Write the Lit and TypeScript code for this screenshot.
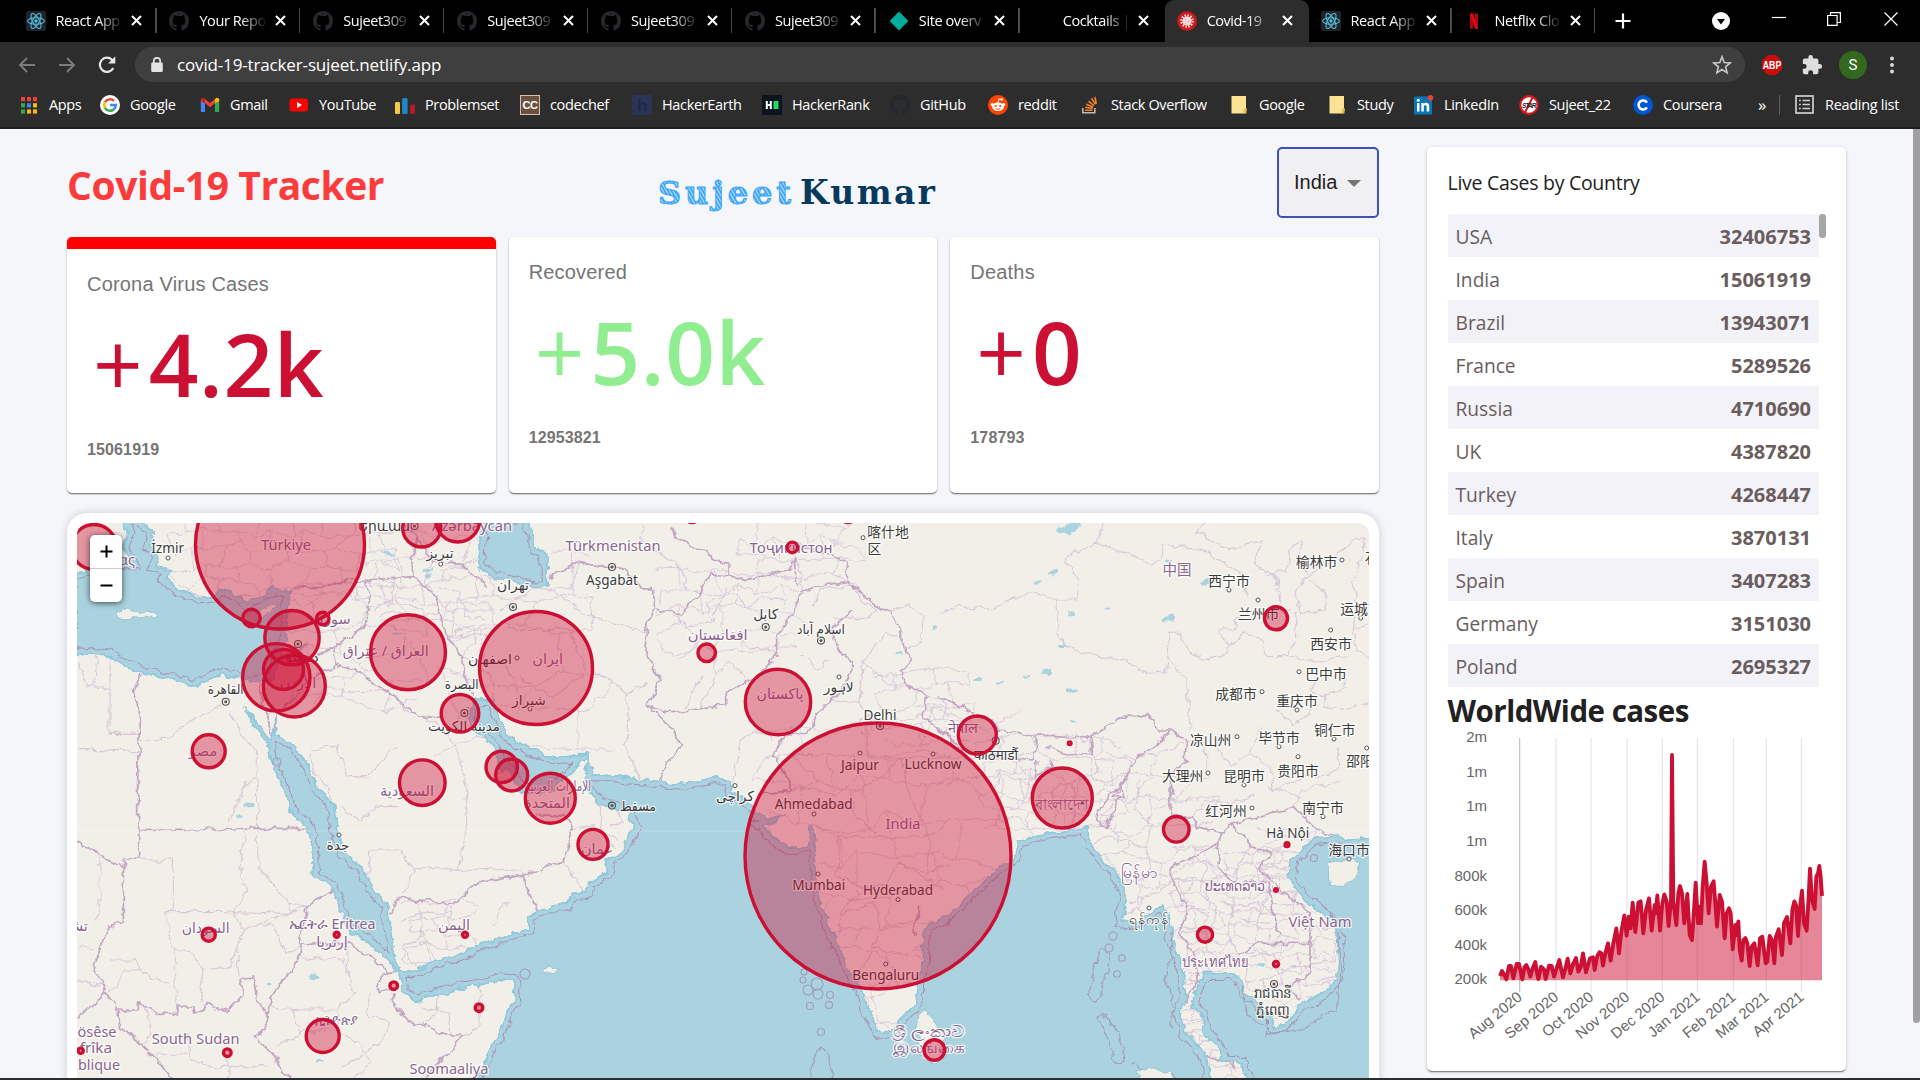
import { LitElement, html, css, svg } from "lit";
import { customElement, property } from "lit/decorators.js";

/* ---------- shared icons ---------- */

const github = (c: string) => html`<svg viewBox="0 0 16 16" width="20" height="20"><path fill=${c} d="M8 0C3.58 0 0 3.58 0 8c0 3.54 2.29 6.53 5.47 7.59.4.07.55-.17.55-.38 0-.19-.01-.82-.01-1.49-2.01.37-2.53-.49-2.69-.94-.09-.23-.48-.94-.82-1.13-.28-.15-.68-.52-.01-.53.63-.01 1.08.58 1.23.82.72 1.21 1.87.87 2.33.66.07-.52.28-.87.51-1.07-1.78-.2-3.64-.89-3.64-3.95 0-.87.31-1.59.82-2.15-.08-.2-.36-1.02.08-2.12 0 0 .67-.21 2.2.82a7.6 7.6 0 0 1 4 0c1.53-1.04 2.2-.82 2.2-.82.44 1.1.16 1.92.08 2.12.51.56.82 1.27.82 2.15 0 3.07-1.87 3.75-3.65 3.95.29.25.54.73.54 1.48 0 1.07-.01 1.93-.01 2.2 0 .21.15.46.55.38A8.01 8.01 0 0 0 16 8c0-4.42-3.58-8-8-8z"/></svg>`;

const react = html`<svg viewBox="0 0 20 20" width="20" height="20"><rect width="20" height="20" rx="2" fill="#20232a"/><g fill="none" stroke="#53c1de" stroke-width="1.1"><ellipse cx="10" cy="10" rx="8.4" ry="3.3"/><ellipse cx="10" cy="10" rx="8.4" ry="3.3" transform="rotate(60 10 10)"/><ellipse cx="10" cy="10" rx="8.4" ry="3.3" transform="rotate(120 10 10)"/></g><circle cx="10" cy="10" r="1.7" fill="#53c1de"/></svg>`;

const netlify = html`<svg viewBox="0 0 20 20" width="20" height="20"><path fill="#00ad9f" d="M10 .6 19.4 10 10 19.4.6 10z"/></svg>`;

const virus = html`<svg viewBox="0 0 20 20" width="20" height="20"><circle cx="10" cy="10" r="9.8" fill="#d01a1e"/><circle cx="10" cy="10" r="4.6" fill="#f6dede"/><circle cx="10" cy="10" r="5.6" fill="none" stroke="#f6dede" stroke-width="2.4" stroke-dasharray="1.5 1.4"/><g fill="#e49a9c"><circle cx="8.6" cy="8.8" r=".8"/><circle cx="11.6" cy="10.4" r=".8"/><circle cx="9" cy="12" r=".7"/></g></svg>`;

const netflix = html`<svg viewBox="0 0 20 20" width="20" height="20"><path fill="#b1060f" d="M6 2.5h3v15l-3 .4zM11 2.5h3v15.4l-3-.4z"/><path fill="#e50914" d="M6 2.5h3l5 15.4-3-.4z"/></svg>`;

const folder = html`<svg viewBox="0 0 20 20" width="20" height="20"><path fill="#fde293" d="M2.5 1H17v14l-1 1v2.6H2.5z"/><path fill="#e3bd4f" d="M15.2 13.5H18l-.6 5.1h-2.8z"/></svg>`;

/* ---------- browser chrome ---------- */

const tabs = [
  { icon: react, title: "React App" },
  { icon: github("#24292e"), title: "Your Repo" },
  { icon: github("#24292e"), title: "Sujeet309" },
  { icon: github("#24292e"), title: "Sujeet309" },
  { icon: github("#24292e"), title: "Sujeet309" },
  { icon: github("#24292e"), title: "Sujeet309" },
  { icon: netlify, title: "Site overv" },
  { icon: "", title: "Cocktails |" },
  { icon: virus, title: "Covid-19 ", active: true },
  { icon: react, title: "React App" },
  { icon: netflix, title: "Netflix Clo" },
];

const apps = html`<svg viewBox="0 0 20 20" width="20" height="20">${[0, 1, 2].map((r) => [0, 1, 2].map((c) => svg`<rect x=${2 + c * 6} y=${2 + r * 6.2} width="4" height="4.2" fill=${[["#ea4335", "#ea4335", "#ea4335"], ["#34a853", "#4285f4", "#fbbc05"], ["#34a853", "#fbbc05", "#fbbc05"]][r][c]}/>`))}</svg>`;

const bookmarks = [
  { w: 81, label: "Apps", icon: apps },
  { w: 100, label: "Google", icon: html`<svg viewBox="0 0 20 20" width="20" height="20"><circle cx="10" cy="10" r="10" fill="#fff"/><g fill="none" stroke-width="2.5"><path stroke="#ea4335" d="M5 7.2A5.8 5.8 0 0 1 14 5.9"/><path stroke="#fbbc05" d="M5 12.8A5.8 5.8 0 0 1 5 7.2"/><path stroke="#34a853" d="M13.6 14.5A5.8 5.8 0 0 1 5 12.8"/><path stroke="#4285f4" d="M10 10h5.8a5.8 5.8 0 0 1-2.2 4.5"/></g></svg>` },
  { w: 89, label: "Gmail", icon: html`<svg viewBox="0 0 20 20" width="20" height="20"><path fill="#4285f4" d="M.8 4.5 5 8v9H2A1.2 1.2 0 0 1 .8 15.800z"/><path fill="#34a853" d="M19.200 4.500 15 8v9h3a1.200 1.200 0 0 0 1.200-1.200z"/><path fill="#ea4335" d="M5 8V4l5 4 5-4v4.300l-5 4z"/><path fill="#c5221f" d="M.8 6V4.800C.8 3 2.800 2.200 4 3.200L5 4v4.300z"/><path fill="#fbbc04" d="M19.200 6V4.800c0-1.800-2-2.600-3.200-1.600L15 4v4.300z"/></svg>` },
  { w: 106, label: "YouTube", icon: html`<svg viewBox="0 0 20 20" width="20" height="20"><rect x=".5" y="3.500" width="18.500" height="13" rx="3" fill="#f00"/><path fill="#fff" d="M8 7v6l5-3z"/></svg>` },
  { w: 125, label: "Problemset", icon: html`<svg viewBox="0 0 20 20" width="20" height="20"><rect y="7" width="5" height="12" rx="1.300" fill="#f6c944"/><rect x="7.200" y="3" width="5.400" height="16" rx="1.300" fill="#1f8acb"/><rect x="15" y="9.500" width="5" height="9.500" rx="1.300" fill="#b11d23"/></svg>` },
  { w: 112, label: "codechef", icon: html`<svg viewBox="0 0 20 20" width="20" height="20"><rect width="20" height="20" fill="#d5bfae"/><rect x="1" y="1" width="18" height="18" fill="#6d5140"/><text x="10" y="13.800" text-anchor="middle" font-family="Liberation Sans" font-weight="700" font-size="11" fill="#fff">CC</text></svg>` },
  { w: 130, label: "HackerEarth", icon: html`<svg viewBox="0 0 20 20" width="20" height="20"><rect width="20" height="20" fill="#2c3454"/><text x="10" y="15.500" text-anchor="middle" font-family="Liberation Sans" font-weight="700" font-size="17" fill="#20284a">h</text></svg>` },
  { w: 128, label: "HackerRank", icon: html`<svg viewBox="0 0 20 20" width="20" height="20"><rect width="20" height="20" fill="#0e141e"/><path fill="#fff" d="M3.800 6h2v3h2V6h2v8h-2v-3h-2v3h-2z"/><rect x="11.500" y="6" width="5" height="8" fill="#1ddb63"/></svg>` },
  { w: 98, label: "GitHub", icon: github("#24292e") },
  { w: 93, label: "reddit", icon: html`<svg viewBox="0 0 20 20" width="20" height="20"><circle cx="10" cy="10" r="10" fill="#ff4500"/><g fill="#fff"><ellipse cx="10" cy="11.800" rx="6" ry="4.200"/><circle cx="4.300" cy="9.500" r="1.600"/><circle cx="15.700" cy="9.500" r="1.600"/><circle cx="13.800" cy="4.400" r="1.200"/></g><path d="M10 8l.9-4 3 .6" fill="none" stroke="#fff" stroke-width=".9"/><g fill="#ff4500"><circle cx="7.700" cy="11" r="1.100"/><circle cx="12.300" cy="11" r="1.100"/></g><path d="M7.500 13.600q2.500 1.600 5 0" fill="none" stroke="#ff4500" stroke-width=".9"/></svg>` },
  { w: 148, label: "Stack Overflow", icon: html`<svg viewBox="0 0 20 20" width="20" height="20"><path fill="none" stroke="#bcbbbb" stroke-width="1.600" d="M1.800 13v4.800h12V13"/><g stroke="#f48024" stroke-width="1.600"><path d="M4 15.200h7.500M4.200 12.300l7.400 1.100M5.200 9.200l6.900 2.800M7.400 6.100l5.700 4.500M10.600 3.300l4 6M14 1.800l1.300 7"/></g></svg>` },
  { w: 98, label: "Google", icon: folder },
  { w: 87, label: "Study", icon: folder },
  { w: 105, label: "LinkedIn", icon: html`<svg viewBox="0 0 20 20" width="20" height="20"><rect y="1.500" width="18" height="18" rx="1" fill="#0a77b5"/><g fill="#fff"><rect x="3" y="8" width="2.500" height="8.500"/><circle cx="4.250" cy="5.300" r="1.500"/><path d="M7.300 8h2.400v1.200c1.400-2.200 5.500-1.800 5.500 2v5.300h-2.500v-4.700c0-2.300-2.900-2.100-2.900 0v4.700H7.300z"/></g><circle cx="16.500" cy="2.800" r="2.800" fill="#f03e33"/></svg>` },
  { w: 114, label: "Sujeet_22", icon: html`<svg viewBox="0 0 20 20" width="20" height="20"><circle cx="10" cy="10" r="8.800" fill="#fff" stroke="#d8141c" stroke-width="2.200"/><path stroke="#d8141c" stroke-width="2" d="M13.500 2.500 6 17.500"/><text x="10" y="12.500" text-anchor="middle" font-family="Liberation Sans" font-weight="700" font-style="italic" font-size="6.500" fill="#222" textLength="14">STAR</text></svg>` },
  { w: 118, label: "Coursera", icon: html`<svg viewBox="0 0 20 20" width="20" height="20"><circle cx="10" cy="10" r="10" fill="#0056d2"/><path fill="none" stroke="#fff" stroke-width="2.600" d="M13.900 7.600a4.500 4.500 0 1 0 0 4.800"/></svg>` },
];

@customElement("browser-chrome")
class BrowserChrome extends LitElement {
  static styles = css`
    :host { display: block; height: 129px; background: #2d2d2d; font-family: "Open Sans", "Noto Sans", sans-serif; color: #fff; box-sizing: border-box; border-bottom: 2px solid #1d1d1d; overflow: hidden; }
    svg { display: block; flex: none; }
    .tabs { height: 42px; background: #000; display: flex; align-items: stretch; padding-left: 13.500px; box-sizing: border-box; }
    .tab { width: 143.900px; box-sizing: border-box; display: flex; align-items: center; padding: 0 0 1px 12px; position: relative; flex: none; }
    .tab:not(.active)::after { content: ""; width: 1.500px; height: 25px; background: #4b4b4b; margin-left: 13px; }
    .tab.pre::after, .tab.active::after { visibility: hidden; }
    .ico { width: 20px; height: 20px; flex: none; margin-right: 10px; }
    .title { width: 68px; overflow: hidden; white-space: pre; font-size: 14.500px; letter-spacing: -.4px; flex: none; -webkit-mask-image: linear-gradient(90deg, #000 60%, transparent 100%); }
    .x { margin-left: 7.500px; }
    .active { background: #2d2d2d; border-radius: 9px 9px 0 0; }
    .active .title { letter-spacing: -.5px; }
    .tools { display: flex; flex: 1; align-items: center; }
    .plus { margin-left: 19px; }
    .media { margin-left: 81px; }
    .min { margin-left: 42px; margin-bottom: 6px; }
    .max { margin-left: 41px; margin-bottom: 5px; }
    .cls { margin-left: 43px; margin-bottom: 5px; }
    .bar { height: 45px; display: flex; align-items: center; box-sizing: border-box; padding-left: 17px; }
    .bar > svg { margin-right: 20px; }
    .bar > .reload { margin-right: 18px; }
    .omni { height: 35px; width: 1610px; border-radius: 18px; background: #3f3f3f; display: flex; align-items: center; box-sizing: border-box; padding: 0 13px 0 15px; }
    .url { flex: 1; font-size: 17px; letter-spacing: -.15px; margin-left: 13px; }
    .ext { display: flex; align-items: center; margin-left: 17px; }
    .puzzle { margin-left: 19px; }
    .av { width: 28px; height: 28px; border-radius: 50%; background: #33691e; display: grid; place-items: center; font: 15px Roboto, sans-serif; margin: 0 22px 0 16px; }
    .marks { display: flex; align-items: center; height: 35px; padding-left: 19px; }
    .mark { display: flex; align-items: center; white-space: nowrap; font-size: 14.500px; letter-spacing: -.35px; flex: none; }
    .mark svg { margin-right: 10px; }
    .more { margin-left: 7px; width: 21px; font-size: 17px; }
    .sep { width: 1px; height: 20px; background: #5c5c5c; margin-right: 15px; }
    .reading { display: flex; align-items: center; gap: 11px; font-size: 14.500px; letter-spacing: -.3px; white-space: nowrap; }
  `;
  render() {
    const cross = html`<svg class="x" width="11" height="11" viewBox="0 0 11 11"><path d="M1 1l9 9M10 1l-9 9" stroke="#fff" stroke-width="2"/></svg>`;
    return html`
      <div class="tabs">
        ${tabs.map((t, i) => html`<div class="tab ${t.active ? "active" : ""} ${i === 7 ? "pre" : ""}"><div class="ico">${t.icon}</div><div class="title">${t.title}</div>${cross}</div>`)}
        <div class="tools">
          <svg class="plus" width="16" height="16" viewBox="0 0 16 16"><path d="M8 .5v15M.5 8h15" stroke="#fff" stroke-width="2.200"/></svg>
          <svg class="media" width="18" height="18" viewBox="0 0 18 18"><circle cx="9" cy="9" r="9" fill="#fff"/><path d="M5 7h8l-4 5.500z" fill="#000"/></svg>
          <svg class="min" width="14" height="14" viewBox="0 0 14 14"><path d="M0 6.500h14" stroke="#fff" stroke-width="1.200"/></svg>
          <svg class="max" width="14" height="14" viewBox="0 0 14 14"><path d="M.6 3.500h9.500v9.900H.6zM3.500 3.500V.6h9.900v9.900h-3.300" fill="none" stroke="#fff" stroke-width="1.200"/></svg>
          <svg class="cls" width="14" height="14" viewBox="0 0 14 14"><path d="M.5.5l13 13M13.500.5l-13 13" stroke="#fff" stroke-width="1.200"/></svg>
        </div>
      </div>
      <div class="bar">
        <svg width="20" height="20" viewBox="0 0 20 20"><path d="M18 10H3.500M10 3 3 10l7 7" fill="none" stroke="#7c7c7c" stroke-width="1.900"/></svg>
        <svg width="20" height="20" viewBox="0 0 20 20"><path d="M2 10h14.500M10 3l7 7-7 7" fill="none" stroke="#7c7c7c" stroke-width="1.900"/></svg>
        <svg class="reload" width="20" height="20" viewBox="0 0 20 20"><path d="M16.300 13A7.100 7.100 0 1 1 15 4.800l1 1" fill="none" stroke="#e6e6e6" stroke-width="2.200"/><path d="M18.300 1.200v7.300H11z" fill="#e6e6e6"/></svg>
        <div class="omni">
          <svg width="14" height="16" viewBox="0 0 14 16"><path d="M3.800 6V4a3.200 3.200 0 0 1 6.400 0v2" fill="none" stroke="#e3e3e3" stroke-width="1.700"/><rect x="1.200" y="5.600" width="11.600" height="9.400" rx="1.200" fill="#e3e3e3"/></svg>
          <span class="url">covid-19-tracker-sujeet.netlify.app</span>
          <svg width="20" height="20" viewBox="0 0 20 20"><path d="M10 1.800l2.200 5.700 6 .4-4.600 3.900 1.500 6-5.100-3.300-5.100 3.300 1.500-6L1.800 7.900l6-.4z" fill="none" stroke="#c9c9c9" stroke-width="1.600"/></svg>
        </div>
        <div class="ext">
          <svg width="20" height="20" viewBox="0 0 20 20"><path fill="#c70d0e" d="M6 0h8l6 6v8l-6 6H6l-6-6V6z"/><text x="10" y="13.600" text-anchor="middle" font-family="Liberation Sans" font-weight="700" font-size="10" fill="#fff" textLength="18.500" lengthAdjust="spacingAndGlyphs">ABP</text></svg>
          <svg class="puzzle" width="22" height="22" viewBox="0 0 24 24"><path fill="#dedede" d="M20.500 11H19V7a2 2 0 0 0-2-2h-4V3.500a2.500 2.500 0 0 0-5 0V5H4a2 2 0 0 0-2 2v3.800h1.500a2.700 2.700 0 0 1 0 5.400H2V20c0 1.100.9 2 2 2h3.800v-1.500a2.700 2.700 0 0 1 5.400 0V22H17a2 2 0 0 0 2-2v-4h1.500a2.500 2.500 0 0 0 0-5z"/></svg>
          <div class="av">S</div>
          <svg width="6" height="18" viewBox="0 0 6 18"><g fill="#d6d6d6"><circle cx="3" cy="2.500" r="2"/><circle cx="3" cy="9" r="2"/><circle cx="3" cy="15.500" r="2"/></g></svg>
        </div>
      </div>
      <div class="marks">
        ${bookmarks.map((b) => html`<div class="mark" style="width:${b.w}px">${b.icon}${b.label}</div>`)}
        <span class="more">»</span><span class="sep"></span>
        <span class="reading"><svg width="19" height="19" viewBox="0 0 19 19"><rect x="1" y="1" width="17" height="17" fill="none" stroke="#cfcfcf" stroke-width="1.700"/><path d="M4 5.500h1.800M4 9.500h1.800M4 13.500h1.800M7.500 5.500H15M7.500 9.500H15M7.500 13.500H15" stroke="#cfcfcf" stroke-width="1.600"/></svg>Reading list</span>
      </div>`;
  }
}

/* ---------- map ---------- */

const waters = [
  // Mediterranean and Aegean
  "M70 575L77 573 92 566 105 572 118 560 130 562 122 545 128 532 120 518 140 518 155 533 150 547 160 558 157 565 173 570 167 578 175 588 187 592 200 598 210 597 218 588 233 593 247 602 260 595 273 587 290 592 293 587 290 600 288 613 287 633 283 647 277 667 272 678 260 683 247 682 223 675 203 682 197 687 177 682 160 677 140 673 127 667 110 657 93 653 70 657Z",
  // Caspian
  "M480 515L480 537 478 567 493 577 513 582 533 588 548 585 547 552 535 548 530 515Z",
  // Red Sea, Gulf, Arabian Sea and Bay of Bengal
  "M243 706L253 717 262 731 270 738 274 728 277 716 276 734 290 742 308 764 318 787 334 805 338 835 345 852 362 868 375 892 388 903 391 930 396 955 400 970 413 971 430 962 460 955 473 947 490 940 510 934 527 929 527 918 537 911 567 903 572 894 585 892 588 881 605 874 608 859 620 853 627 840 633 826 628 814 617 809 597 802 587 792 583 774 589 759 582 761 572 774 563 781 550 792 530 796 520 792 513 778 506 768 500 774 496 757 490 743 473 730 467 707 477 698 493 700 500 718 510 737 523 744 543 755 567 757 577 755 588 752 593 774 623 776 657 781 687 783 713 777 730 779 733 792 747 800 757 813 767 820 785 814 776 822 763 826 777 840 790 848 807 844 810 827 815 826 815 844 817 870 820 900 828 922 837 940 847 966 860 985 870 1014 880 1033 890 1031 900 1018 912 1007 917 996 917 981 923 959 922 933 928 924 950 914 953 910 970 893 983 882 997 867 1012 860 1018 840 1033 835 1050 833 1073 830 1087 825 1090 840 1100 855 1113 870 1123 883 1127 900 1122 920 1133 923 1150 913 1162 903 1170 917 1173 940 1178 953 1185 977 1187 997 1180 1013 1187 1033 1203 1050 1210 1067 1213 1090 472 1090 483 1063 490 1047 503 1023 507 1010 514 999 512 981 500 980 480 987 460 990 437 995 415 1002 403 993 398 972 380 953 360 937 347 930 340 910 333 890 313 877 312 847 307 827 288 810 287 798 278 780 270 760 267 743 253 727Z",
  // Gulf of Thailand and South China Sea
  "M1252 1090L1240 1063 1223 1063 1217 1047 1203 1030 1200 1013 1190 1007 1197 987 1203 973 1233 973 1242 983 1245 993 1255 997 1263 1010 1273 1013 1273 1027 1283 1025 1303 1002 1323 993 1335 980 1338 960 1337 937 1327 917 1307 903 1293 887 1287 877 1292 860 1303 848 1313 840 1333 835 1347 840 1380 837 1380 1090Z",
];

const islands = [
  "M115 612L127 609 140 614 157 613 155 618 130 619 118 616Z",
  "M255 612L267 608 280 605 272 613 262 616Z",
  "M1328 863L1347 858 1361 860 1357 877 1343 887 1329 883Z",
  "M919 1012L927 1010 935 1022 944 1040 947 1055 932 1064 921 1055 917 1030Z",
  "M1137 1071L1150 1069 1170 1073 1180 1090 1142 1090Z",
  "M540 973L549 966 558 971 548 974Z",
];

interface Tile { x: number; y: number; sy: number; major: string[]; minor: string[]; }

// Boundary lines, stored per tile in the tile's own drawing units.
const tiles: Tile[] = [
  { x: 60, y: 500, sy: 1 / 3,
    major: ["700 262 760 265 830 245 920 240 1000 235 1060 230 1075 245", "1060 230 1055 180 1065 110 1040 69", "1075 245 1130 290 1130 340 1165 410 1205 470 1210 520 1240 590", "920 240 930 290 915 380 820 440 835 500 890 510 1075 645 1140 655", "835 500 760 525 700 600 650 640", "820 440 760 475", "600 550 637 715 650 640", "240 525 220 570 235 610 233 900", "1065 110 1120 180 1200 190 1260 240 1280 260", "710 450 740 440"],
    minor: ["52 752 233 752", "235 718 330 718 360 680 480 620", "150 480 150 700 233 700", "510 640 560 720 595 770 593 900", "590 830 540 870 530 900", "52 490 80 560 100 558 150 570", "110 460 105 560", "740 640 800 560 880 580 980 570 1050 640", "750 750 830 735 870 830 930 830 980 760 1010 740", "1100 655 1160 690 1195 760 1200 810 1220 850 1215 900", "750 760 770 830 800 860 815 900", "1130 340 1060 360 1000 330 960 350", "1200 470 1250 430 1240 370 1165 410", "1140 260 1200 280 1220 350 1280 360", "1000 235 990 300 940 330", "1205 470 1290 520 1300 600", "1120 180 1090 240 1160 330 1300 330", "1165 410 1290 400"] },
  { x: 60, y: 780, sy: 1 / 3,
    major: ["233 0 233 240 190 240 190 430 145 435 130 480 100 560 140 640 52 710", "235 148 750 148", "52 185 190 262", "140 640 175 690 235 690 235 665 290 700 355 700 352 678 403 678 400 705 430 690 440 670 500 695 550 640 540 600 580 585 590 660 620 700 620 740 580 775 650 830 660 875 700 895", "175 690 175 740 215 760 240 790 300 850 330 895", "620 740 630 660 670 600 700 560 720 520 725 440 745 375 820 330", "725 495 780 490 870 490 940 540 980 575 1010 570", "980 575 950 610 955 640 1000 630", "1000 640 990 655 1040 720 1175 768 1210 768 1090 895", "1000 400 1010 355 1140 365 1180 375 1210 345 1260 305 1350 290", "900 410 1000 400"],
    minor: ["120 230 120 390 105 420", "190 240 337 240 337 395", "316 395 520 395 680 400 740 375", "316 395 340 500 350 690", "520 395 560 330 540 290 555 150", "593 0 593 148", "500 148 560 0", "590 160 600 260 640 320 690 370 740 375", "340 505 400 520 430 570 420 640 430 670", "430 570 510 560 530 500 555 450 520 395", "530 500 540 590", "555 450 600 430 640 440 680 520 720 500", "600 430 690 400 690 370", "150 540 220 540 240 570 290 600 330 610", "150 640 190 570 240 570", "52 605 140 620", "52 500 100 510", "250 670 280 760 250 790", "385 760 390 840 440 860 620 860", "290 825 380 820", "725 530 850 540 880 640 830 690 720 690 630 680", "700 690 720 760 650 800", "720 760 800 750", "830 690 840 760 900 790 930 850 880 895", "860 500 865 600", "930 640 920 700 990 730 960 790 850 860", "500 830 510 860 500 895", "1130 640 1130 700 1075 735", "1255 620 1260 690 1260 740 1210 768", "1080 680 1170 700 1175 768", "840 80 900 120 960 80 1020 80", "920 290 930 210 1020 210 1060 265 1350 270", "1220 0 1220 140 1195 268", "1060 265 1030 340", "1020 420 1080 400 1090 470 1030 500", "1170 380 1170 440 1230 470", "1090 470 1110 540", "1080 400 1170 400", "1030 500 1060 560", "1300 440 1320 380 1350 360"] },
  { x: 500, y: 500, sy: 0.37,
    major: ["150 210 180 190 240 170 380 190 420 240 458 240 460 290 540 310 600 250 630 200 690 205", "460 290 440 350 435 400 480 490 445 555 510 575 680 555 680 520 770 480 830 420 830 370 880 300 900 250 960 230 1045 220", "445 555 520 625 545 665 500 710 475 765", "510 70 530 100 610 140 690 180 690 205 740 215 870 190 880 160 895 230", "880 115 1000 150 1045 180 1045 220", "780 795 870 785 870 760 820 690 850 640 920 630 960 570 1040 500 1060 440 1010 400 990 340 1060 300", "1045 220 1130 290 1175 300 1205 370 1230 430 1200 460 1215 500 1280 530 1270 590 1350 640", "0 1025 65 1015 190 975 220 885 200 860 100 855", "65 1015 113 1110", "1260 1100 1240 1180"],
    minor: ["150 235 250 310 330 330 440 360", "280 460 380 520 390 600 370 660 420 750", "280 460 380 520 440 500", "425 70 425 110 550 190 560 240", "240 170 210 240 100 240 0 300", "520 310 560 340 640 330 680 240", "640 330 620 280 700 250 740 290 800 260 850 270", "540 430 600 380 640 400 690 360 760 400 830 410", "560 560 610 470", "600 565 650 470 690 440", "640 400 650 470", "690 440 740 480", "710 700 720 650 770 620 820 650", "700 770 710 700", "940 290 960 240 1060 230 1090 280 1130 300 1100 320 1000 320", "900 420 960 460 990 430", "1000 540 1080 550 1120 620", "1080 550 1090 440 1170 500 1215 500", "1090 440 1150 360 1205 370", "1180 300 1230 280 1270 320 1260 390 1210 400", "1280 530 1330 540 1340 600", "0 430 40 480 60 560", "20 350 210 350 260 470 160 530 60 480", "0 1000 65 1000 70 1015", "190 975 260 1070", "220 885 280 880 340 940", "300 820 310 900 350 920", "290 820 350 830 370 870 330 880", "870 785 960 760 1050 790 1130 760 1200 700 1350 690", "960 760 860 680", "940 880 1020 910 1150 910 1290 910 1350 860", "1020 910 1010 1010 1080 1050 1160 1040 1190 980 1280 1010 1290 910", "1010 1200 1020 1110 1080 1060", "1020 1120 1130 1090 1140 1160 1120 1210 1270 1240", "1140 1160 1260 1130", "1190 980 1330 1050", "1280 1010 1350 980", "1110 1310 1130 1400 1160 1430", "1190 1300 1110 1320", "1120 1210 1070 1280", "1050 790 1060 850 1130 900", "1200 700 1230 800 1290 910", "1090 620 1110 700 1200 700"] },
  { x: 940, y: 500, sy: 1 / 3,
    major: ["0 590 80 630 130 650 180 690 280 710 330 705 450 715 540 655 620 640 660 690 690 690 740 720 735 780 690 830 700 890", "0 690 80 760 180 770 280 780 290 710", "320 740 380 765 455 760 450 715", "690 690 650 740 590 770 560 830 520 890 550 890 540 850", "290 780 290 830 340 800 330 780"],
    minor: ["490 69 470 130 375 175 390 210 420 240 410 300 350 300 290 280 200 300 150 325 50 320 0 340", "470 130 560 160 640 190 665 175 665 135 780 145 900 220 920 290", "350 300 355 400 380 440 480 470 560 480 610 520 680 515 690 400 720 400 740 450 790 475 840 475 870 440 830 390 880 390 890 350 960 330 1060 330", "690 480 740 540 750 690", "800 69 770 95 870 150 970 120 940 190 1010 230 1020 310", "980 225 1040 210 1050 150 1085 120 1080 180 1105 230 1070 260 1080 340 1150 330 1160 280 1105 240", "1105 230 1170 190 1230 130 1280 110", "1280 110 1240 250 1250 320 1240 380 1285 370", "1240 380 1240 430 1290 480", "1070 340 1070 420 1040 450 1050 470 980 470 970 430 910 395 870 440", "1050 470 1140 490 1220 470", "1140 530 1110 570 1160 590 1150 620 1200 630 1280 605", "1160 590 1220 560 1200 510", "1010 630 1060 670 1110 650 1110 610", "960 680 930 760 870 800 830 740 850 700", "930 760 990 800 1000 870 1100 830 1190 820 1200 740", "990 860 1060 890 1090 895", "640 830 600 860 590 895", "340 870 400 840 480 820 460 760", "20 860 60 830 130 890", "250 895 240 840 290 830"] },
  { x: 940, y: 780, sy: 1 / 3,
    major: ["690 20 690 110 760 110 770 140 850 160 830 190 760 230 700 260 700 310 740 380 720 460 760 520 775 600 740 660", "850 160 870 130 960 110 1060 80 1130 150 1180 165", "830 190 840 270 880 310 980 300 1000 400 1020 470", "900 520 950 490 1110 490 1110 580 1050 620 1080 660", "870 130 940 200 990 220 960 270 1050 350 1110 400 1110 490", "540 50 500 145 480 140 470 100 510 40 560 0", "800 830 840 840 880 860 890 830"],
    minor: ["460 190 500 170 620 200 640 130 580 90 600 0", "520 130 540 190", "620 200 630 280 600 300 560 300", "630 280 690 290", "600 400 610 350 660 340 690 300", "570 370 610 350", "700 60 640 90", "210 90 250 70 270 0", "300 30 300 120", "340 20 340 140", "400 10 400 130", "760 230 800 260 780 340 830 380 820 440", "840 270 800 330", "740 380 810 400", "720 460 800 450 860 470 900 520", "860 470 880 380 840 360", "880 380 960 370 1000 400", "960 370 950 490", "900 420 990 430", "800 500 830 540 900 530", "760 520 800 500 800 450", "930 530 1000 520 1010 580 960 610 920 600", "1010 580 1060 560 1110 560", "1000 520 1060 500", "960 610 990 650", "1120 600 1190 590", "1110 550 1180 540", "1110 440 1180 450", "1000 370 1100 380", "960 270 1040 260", "990 220 1040 190", "940 200 900 240 880 310", "760 110 800 60 880 70 940 50", "1060 80 1090 30 1200 0", "700 620 770 600", "730 740 790 720", "770 800 830 770", "750 830 820 830"] },
];

// Offshore zone outlines round small island groups and territorial waters.
const zones = [
  "M1096 960 q7-14 12-8 q4 10-2 22 q-3 14 -7 24 q-7 8 -9-6 q1-18 6-32z", "M1098 1018 q4-8 9 2 q14 8 13 22 q6 12 4 18 q-9 6-12-8 q-8-14-14-34z",
  "M1170 930L1171 955 1165 980 1174 1005 1170 1028M1337 930L1341 970 1336 1010 1300 1030 1273 1033 1247 1015 1242 985",
  "M811 1080q-1-22 10-33 q10 6 12 33M1130 1064q8 0 12 6q26 2 36 10",
];
const zoneDots = [[1113, 936, 4], [1109, 948, 4], [1122, 958, 3.3], [1117, 974, 3.3], [804, 972, 3], [803, 980, 3], [830, 995, 3.500], [829, 1005, 3.500], [810, 1006, 3.500], [821, 1032, 3.500], [808, 990, 5], [817, 984, 6], [818, 994, 5], [525, 974, 5], [1314, 858, 3.500], [277, 762, 4]];

const lakes = [[248, 805, 5], [239, 817, 4], [313, 978, 4.500], [392, 554, 4], [386, 553, 5], [428, 570, 4], [428, 576, 3], [397, 634, 3], [1207, 583, 6], [1047, 672, 6], [1071, 690, 5], [1168, 619, 5], [1053, 573, 5], [1170, 560, 3], [1107, 607, 3], [1026, 675, 3], [978, 680, 4], [1001, 683, 3], [1072, 613, 4], [1062, 645, 4], [1065, 530, 8], [1072, 526, 9], [270, 983, 2.500], [320, 1062, 3], [1260, 965, 4], [1038, 581, 3], [1073, 722, 3], [900, 652, 3], [935, 630, 3]];

type Label = [string, number, number, ("c" | "t")?, number?];
// text, centre x, baseline, kind (c country, t town), fitted width
const labels: Label[] = [
  ["İzmir", 167.7, 553, "t", 33], ["Türkiye", 286, 550, "c", 50], ["ας", 127, 565, "c"], ["Երևան", 384, 531, "t"], ["Azərbaycan", 472, 531, "c", 80],
  ["تبریز", 440, 558, "t"], ["سوريا", 333, 624, "c"], ["العراق / عێراق", 385.7, 656, "c", 86], ["القاهرة", 225.7, 694, "t", 36], ["البصرة", 461.7, 689, "t", 34], ["مدينة الكويت", 464, 731, "t", 72],
  ["مصر", 203, 756, "c"], ["السعودية", 407, 796, "c", 54], ["الأردن", 298, 688, "c"], ["دمشق", 300, 662, "t"], ["اصفهان", 490, 664, "t", 44],
  ["تهران", 513, 590, "t"], ["Türkmenistan", 613, 551, "c", 95], ["Aşgabat", 612, 585, "t", 52], ["ایران", 547.7, 664, "c"], ["شیراز", 529, 705, "t"], ["کابل", 765.7, 619, "t"], ["اسلام آباد", 821, 634, "t", 48],
  ["افغانستان", 717.7, 640, "c", 60], ["Тоҷикистон", 791, 553, "c", 83], ["喀什地", 888, 537, "t"], ["区", 874.500, 554, "t"], ["پاکستان", 780, 699, "c", 47], ["لاہور", 838.7, 692, "t"],
  ["Delhi", 880, 720, "t", 33], ["Jaipur", 860, 770, "t", 38], ["Lucknow", 933, 769, "t", 57], ["Ahmedabad", 813.7, 809, "t", 78], ["India", 903, 829, "c", 35], ["Mumbai", 818.7, 890, "t", 53], ["Hyderabad", 898, 895, "t", 70], ["Bengaluru", 885.7, 980, "t", 67],
  ["کراچی", 735, 801, "t"], ["مسقط", 638, 811, "t", 36], ["الإمارات العربية", 558, 791, "c", 66], ["المتحدة", 547, 808, "c", 46], ["عمان", 597, 854, "c"], ["ශ්‍රී ලංකාව", 929, 1037, "c", 72], ["இலங்கை", 929, 1053, "c", 72],
  ["中国", 1177, 575, "c"], ["西宁市", 1229, 586, "t"], ["兰州市", 1258.7, 619, "t"], ["榆林市", 1316.7, 567, "t"], ["石", 1372, 563, "t"], ["运城市", 1361, 614, "t"], ["西安市", 1331, 649, "t"], ["巴中市", 1326, 679, "t"], ["成都市", 1236, 699, "t"], ["重庆市", 1297, 706, "t"], ["铜仁市", 1334.7, 735, "t"], ["毕节市", 1279, 743, "t"], ["凉山州", 1210.7, 745, "t"], ["邵阳市", 1367, 766, "t"], ["贵阳市", 1298, 776, "t"], ["昆明市", 1244, 781, "t"], ["大理州", 1182.7, 781, "t"],
  ["नेपाल", 963, 733, "c"], ["काठमाडौं", 996, 760, "t", 44], ["বাংলাদেশ", 1062, 810, "c", 54], ["红河州", 1226, 816, "t"], ["南宁市", 1323, 813, "t"], ["Hà Nội", 1287.7, 838, "t", 43], ["海口市", 1349, 855, "t"],
  ["မြန်မာ", 1139, 878, "c", 37], ["ရန်ကုန်", 1149, 924, "t", 40], ["ປະເທດລາວ", 1235, 891, "c", 60], ["Việt Nam", 1320, 927, "c", 63], ["ประเทศไทย", 1215, 967, "c", 66], ["រាជធានី", 1273, 998, "t", 38], ["ភ្នំពេញ", 1273, 1015, "t", 34],
  ["جدة", 338, 850, "t"], ["السودان", 205.7, 933, "c", 48], ["ኤርትራ Eritrea", 332, 929, "c", 87], ["إرتريا", 332, 947, "c"], ["اليمن", 454, 930, "c"], ["South Sudan", 195.7, 1044, "c", 88], ["ኢትዮጵያ", 336, 1025, "c", 43], ["Soomaaliya", 449, 1074, "c", 79],
  ["ösêse", 97, 1037, "c", 39], ["Afrîka", 91, 1053, "c", 42], ["blique", 99, 1070, "c", 42], ["تشاد", 74, 931, "c"],
];

const towns = [[168, 558], [440.7, 564], [839, 677], [860, 753], [933, 754], [814, 814], [818, 874], [898, 899.6], [885.7, 964], [735, 785.6], [863, 537.7], [1229, 590], [1258, 600], [1342, 560], [1360.7, 618], [1330.7, 630], [1299, 671.7], [1262, 691.7], [1297, 710], [1334, 739], [1279, 746.7], [1237, 736.7], [1366.7, 748], [1298, 756.7], [1244, 785], [1208, 773], [1252, 808], [1323, 816.7], [1349, 859], [1149, 908], [339, 835], [517, 658], [530, 709]];
const capitals = [[225.7, 701.7], [298, 644], [464.4, 713], [414.5, 526], [513, 607], [612, 567], [765.7, 627], [821, 640.6], [612, 805.6], [995.7, 740.7], [1274, 984], [880, 726]];

const cases = [
  [94, 547, 22.500], [280, 544.500, 84.500], [251.500, 618, 8.700], [322.700, 618.500, 6.300], [292, 637.700, 27.200], [276.300, 677.300, 33.700], [283.500, 669.500, 20], [294.300, 686, 31],
  [408, 652.300, 37.500], [460, 713.300, 18.800], [421.700, 528, 19], [457.700, 520, 22], [208.700, 751.300, 16.500], [422.300, 782.700, 22.800], [501.700, 767, 15.700], [511.700, 775, 16],
  [536, 668, 56.500], [550.300, 798.200, 25], [593, 844.400, 15], [706.700, 652.800, 8.800], [792.300, 547.400, 5.300], [778, 702, 32.700], [878, 856, 133], [934.300, 1050, 10.300],
  [692, 514.500, 8], [848, 514.500, 8], [977.300, 735, 19], [1069.700, 743.300, 1.300], [1276, 618.300, 11.500], [1062.300, 798, 30], [1176.300, 829.300, 12.800], [1287, 844.700, 1.900], [1276, 890, 1.300],
  [1205, 934.700, 7.600], [1276, 964, 2.600], [208.700, 934.700, 6.600], [336.700, 934.700, 2.500], [465, 934.700, 2.500], [393.700, 985.700, 3.800], [479, 1007.700, 3.800], [322.700, 1036, 16.500], [227.300, 1052.700, 3.800], [80.700, 1050.700, 2.600],
];

// Irregular honeycomb of small districts: x, y, width, height, cell size.
const districts = [[170, 515, 210, 85, 17], [380, 515, 95, 110, 22], [740, 520, 110, 60, 20], [450, 560, 140, 190, 38], [760, 720, 270, 300, 34], [980, 740, 130, 90, 18], [1080, 750, 120, 170, 26], [1175, 850, 165, 180, 15], [1180, 1000, 60, 80, 16], [1260, 830, 60, 60, 12], [660, 570, 130, 80, 20], [290, 600, 120, 100, 26], [405, 905, 60, 60, 14], [880, 670, 90, 60, 18]];

function mesh([x, y, w, h, s]: number[]): string {
  let seed = x * 7 + y * 13;
  const rnd = () => ((seed = (seed * 16807 + 11) % 2147483647) / 2147483647) - 0.5;
  const cols = Math.ceil(w / s), rows = Math.ceil(h / s);
  const p: number[][][] = [];
  for (let r = 0; r <= rows; r++) {
    p.push([]);
    for (let c = 0; c <= cols; c++) p[r].push([x + c * s + rnd() * s * 0.8, y + r * s + rnd() * s * 0.8]);
  }
  let d = "";
  for (let r = 0; r <= rows; r++)
    for (let c = 0; c <= cols; c++) {
      const [a, b] = p[r][c];
      if (c < cols) d += `M${a.toFixed(1)} ${b.toFixed(1)}L${p[r][c + 1][0].toFixed(1)} ${p[r][c + 1][1].toFixed(1)}`;
      if (r < rows && (r + c) % 2) d += `M${a.toFixed(1)} ${b.toFixed(1)}L${p[r + 1][c][0].toFixed(1)} ${p[r + 1][c][1].toFixed(1)}`;
    }
  return d;
}

@customElement("case-map")
class CaseMap extends LitElement {
  static styles = css`
    :host { display: block; position: relative; height: 100%; overflow: hidden; border-radius: 12px 12px 0 0; }
    .map { display: block; background: #f2efe9; }
    .water { fill: #aad3df; }
    .shore { fill: none; stroke: #8ecadd; stroke-width: 3; }
    .zone { fill: none; stroke: #a893b8; stroke-width: 14; }
    .zoneIn { fill: none; stroke: #aad3df; stroke-width: 12; }
    .major, .minor, .mesh { fill: none; vector-effect: non-scaling-stroke; stroke-linejoin: round; }
    .major { stroke: #c2a6c2; stroke-width: 1.700; }
    .minor { stroke: #d9c8d8; stroke-width: 1.100; }
    .mesh { stroke: #dccbdb; stroke-width: 1; }
    .off { fill: none; stroke: #a39abd; stroke-width: 1.100; }
    .land { fill: #f2efe9; stroke: #93c7d8; stroke-width: 1; }
    .label { font-family: "Noto Sans", "DejaVu Sans", "Noto Sans CJK SC", sans-serif; font-size: 14.500px; text-anchor: middle; paint-order: stroke; stroke: #fff; stroke-opacity: .75; stroke-width: 2.600; stroke-linejoin: round; }
    .label.t { fill: #3b3b3b; font-size: 13.800px; }
    .label.c { fill: #8b648c; }
    .town { fill: #fff; stroke: #555; stroke-width: 1; }
    .cap { fill: none; stroke: #555; stroke-width: 1.100; }
    .capDot { fill: #555; }
    .case { fill: #cc1034; fill-opacity: .4; stroke: #cc1034; stroke-width: 3.400; }
    .zoom { position: absolute; left: 13px; top: 12px; width: 32px; background: #fff; border-radius: 5px; box-shadow: 0 1px 6px rgba(0, 0, 0, .65); }
    .zoom div { height: 33px; display: grid; place-items: center; }
    .zoom div + div { border-top: 1px solid #ccc; }
  `;
  render() {
    return html`
      <svg class="map" width="1292" height="560" viewBox="77 523 1292 560">
        <defs>
          <filter id="rough" x="60" y="506" width="1330" height="600" filterUnits="userSpaceOnUse" color-interpolation-filters="sRGB"><feTurbulence type="fractalNoise" baseFrequency=".09" numOctaves="3" seed="4"/><feDisplacementMap in="SourceGraphic" scale="9" xChannelSelector="R" yChannelSelector="G"/></filter>
          <clipPath id="sea">${waters.map((d) => svg`<path d=${d}/>`)}</clipPath>
        </defs>
        <g filter="url(#rough)">
          <rect x="40" y="490" width="1380" height="640" fill="#f2efe9"/>
          ${districts.map((d) => svg`<path class="mesh" d=${mesh(d)}/>`)}
          ${tiles.map((t) => svg`<g transform="translate(${t.x} ${t.y}) scale(.33333 ${t.sy})">
            ${t.minor.map((p) => svg`<polyline class="minor" points=${p}/>`)}
            ${t.major.map((p) => svg`<polyline class="major" points=${p}/>`)}</g>`)}
          ${waters.map((d) => svg`<path class="water" d=${d}/>`)}
          <g clip-path="url(#sea)">
            ${waters.map((d) => svg`<path class="zone" d=${d}/>`)}
            ${waters.map((d) => svg`<path class="zoneIn" d=${d}/>`)}
            ${waters.map((d) => svg`<path class="shore" d=${d}/>`)}
          </g>
          ${zones.map((d) => svg`<path class="off" d=${d}/>`)}
          ${islands.map((d) => svg`<path class="land" d=${d}/>`)}
          ${lakes.map(([x, y, r]) => svg`<ellipse class="water" cx=${x} cy=${y} rx=${r} ry=${r * 0.5}/>`)}
        </g>
        ${zoneDots.map(([x, y, r]) => svg`<circle class="off" cx=${x} cy=${y} r=${r}/>`)}
        <path d="M77 831H1369" stroke="#fff" stroke-opacity=".25"/>
        ${towns.map(([x, y]) => svg`<circle class="town" cx=${x} cy=${y} r="2"/>`)}
        ${capitals.map(([x, y]) => svg`<circle class="cap" cx=${x} cy=${y} r="3.500"/><circle class="capDot" cx=${x} cy=${y} r="1.500"/>`)}
        ${labels.map(([s, x, y, k, w]) => w
          ? svg`<text class="label ${k}" x=${x} y=${y} textLength=${w} lengthAdjust="spacingAndGlyphs">${s}</text>`
          : svg`<text class="label ${k}" x=${x} y=${y}>${s}</text>`)}
        ${cases.map(([x, y, r]) => svg`<circle class="case" cx=${x} cy=${y} r=${r}/>`)}
      </svg>
      <div class="zoom">
        <div><svg width="13" height="13" viewBox="0 0 13 13"><path d="M6.500 .5v12M.5 6.500h12" stroke="#000" stroke-width="2"/></svg></div>
        <div><svg width="13" height="13" viewBox="0 0 13 13"><path d="M.5 6.500h12" stroke="#000" stroke-width="2"/></svg></div>
      </div>`;
  }
}

/* ---------- chart ---------- */

// Daily new cases in thirds of a pixel from the plot's corner.
const series = "300 888 306 873 313 885 319 898 327 858 333 858 340 895 350 852 357 852 367 898 373 862 379 855 385 868 391 890 398 865 406 846 411 880 415 897 423 860 432 868 437 897 447 857 455 858 462 890 470 865 478 840 484 870 489 892 495 870 503 836 511 880 520 850 528 834 535 875 542 862 549 820 558 877 570 835 579 832 584 870 592 828 598 817 604 820 609 857 616 820 624 790 632 842 640 790 649 745 657 820 664 755 673 706 680 767 686 710 692 745 698 668 706 756 715 668 722 664 730 760 738 690 747 655 755 752 764 675 767 700 772 646 780 752 787 670 793 643 800 665 806 738 813 660 816 225 820 665 829 735 835 640 840 618 846 640 853 730 862 642 869 765 876 780 880 720 887 608 894 730 898 680 903 730 908 620 914 545 920 610 926 700 933 620 941 604 951 740 959 645 966 665 974 775 980 700 987 685 992 700 998 808 1006 735 1010 765 1015 724 1019 810 1025 842 1030 780 1036 774 1042 790 1049 858 1055 800 1063 790 1073 856 1080 775 1087 770 1097 850 1102 845 1109 768 1116 780 1123 850 1128 770 1136 748 1146 825 1152 730 1161 711 1171 790 1177 690 1183 664 1188 675 1194 768 1200 680 1206 632 1212 730 1220 752 1226 650 1230 566 1236 660 1244 687 1249 590 1254 580 1258 558 1262 590 1266 648";
const months: [string, number][] = [["Aug 2020", 359], ["Sep 2020", 468], ["Oct 2020", 573], ["Nov 2020", 681], ["Dec 2020", 787], ["Jan 2021", 892], ["Feb 2021", 1000], ["Mar 2021", 1099], ["Apr 2021", 1204]];
const ticks = ["2m", "1m", "1m", "1m", "800k", "600k", "400k", "200k"];

@customElement("case-chart")
class CaseChart extends LitElement {
  static styles = css`
    :host { display: block; }
    svg { display: block; height: 320px; }
    text { font-family: "Liberation Sans", Arial, sans-serif; font-size: 45px; fill: #666; text-anchor: end; }
    .line { fill: none; stroke: #cc1034; stroke-width: 11.500; stroke-linejoin: round; }
    .area { fill: #cc1034; fill-opacity: .5; }
    .grid { stroke: #e5e5e5; stroke-width: 3.500; }
    .grid.first { stroke: #bfbfbf; }
  `;
  render() {
    return html`<svg width="379" viewBox="144 156 1137 960">
      ${months.map(([, x], i) => svg`<path class="grid ${i ? "" : "first"}" d="M${x} 174V936"/>`)}
      <path class="area" d="M300 901L${series}L1266 901Z"/>
      <path class="line" d="M${series}"/>
      ${ticks.map((t, i) => svg`<text x="261" y=${187 + i * 103.7}>${t}</text>`)}
      ${months.map(([m, x]) => svg`<text transform="translate(${x + 10} 956) rotate(-39.500)">${m}</text>`)}
    </svg>`;
  }
}

/* ---------- dashboard ---------- */

@customElement("info-card")
class InfoCard extends LitElement {
  @property() heading = "";
  @property() today = "";
  @property() total = "";
  @property({ type: Boolean, reflect: true }) selected = false;
  @property({ type: Boolean, reflect: true }) green = false;
  static styles = css`
    :host { display: block; box-sizing: border-box; height: 256px; padding: 22px 20px; background: #fff; border-radius: 5px; overflow: hidden; box-shadow: 0 1px 2px rgba(0, 0, 0, .38), 0 2px 1px -1px rgba(0, 0, 0, .3); font-family: "Liberation Sans", Arial, sans-serif; color: #757575; }
    :host([selected]) { border-top: 12px solid red; }
    .head { font-size: 20px; line-height: 27px; letter-spacing: .19px; }
    .big { font: 600 87px/100px "Open Sans", "Noto Sans", sans-serif; color: #cc1034; margin: 15px 0 0 6px; letter-spacing: .6px; }
    .plus { font-weight: 500; letter-spacing: 6px; }
    :host([green]) .big { color: lightgreen; }
    .total { font-weight: 700; font-size: 16px; line-height: 24px; letter-spacing: .13px; margin-top: 25px; }
  `;
  render() {
    return html`<div class="head">${this.heading}</div><div class="big"><span class="plus">+</span>${this.today}</div><div class="total">${this.total}</div>`;
  }
}

const countries: [string, number][] = [["USA", 32406753], ["India", 15061919], ["Brazil", 13943071], ["France", 5289526], ["Russia", 4710690], ["UK", 4387820], ["Turkey", 4268447], ["Italy", 3870131], ["Spain", 3407283], ["Germany", 3151030], ["Poland", 2695327]];

@customElement("app-root")
class AppRoot extends LitElement {
  static styles = css`
    :host { display: block; width: 1920px; height: 1080px; overflow: hidden; background: #f5f6fa; font-family: "Open Sans", "Noto Sans", sans-serif; }
    .page { display: flex; height: 949px; overflow: hidden; }
    .left { width: 1312px; margin-left: 67px; padding-top: 18px; display: flex; flex-direction: column; flex: none; }
    .top { display: flex; height: 71px; margin-bottom: 19px; }
    h1 { margin: 9px 0 0; font-size: 39px; line-height: 58px; letter-spacing: -.42px; color: #fc3c3c; width: 590px; white-space: nowrap; }
    .logo { margin-top: 17px; display: block; }
    .logo text { font-family: "DejaVu Serif", serif; font-weight: 700; }
    .select { margin-left: auto; width: 102px; height: 71px; box-sizing: border-box; border: 2px solid #3f51b5; border-radius: 5px; background: #f0f0f2; display: flex; align-items: center; padding: 0 0 0 15px; font: 20px "Liberation Sans", Arial, sans-serif; color: #212121; gap: 10px; }
    .select svg { margin-top: 2px; }
    .cards { display: grid; grid-template-columns: repeat(3, 1fr); column-gap: 13px; }
    .mapcard { margin-top: 20px; height: 575px; box-sizing: border-box; background: #fff; border-radius: 20px 20px 0 0; padding: 10px 10px 0; box-shadow: 0 0 9px rgba(60, 60, 90, .22); flex: none; }
    .right { width: 419px; height: 924px; margin: 18px 67px 0 48px; background: #fff; border-radius: 5px; box-shadow: 0 1px 3px rgba(0, 0, 0, .3), 0 2px 1px -1px rgba(0, 0, 0, .35); box-sizing: border-box; padding: 21px 20px 0 20.500px; flex: none; }
    .lead { font-size: 19.500px; line-height: 30px; color: #212121; letter-spacing: -.28px; }
    .listwrap { display: flex; margin-top: 16px; }
    .list { width: 372px; }
    .row { height: 43px; box-sizing: border-box; display: flex; justify-content: space-between; align-items: center; padding: 2px 8px 0; font-size: 19.200px; color: #6a5d5d; }
    .row:nth-child(odd) { background: #f3f2f8; }
    .row b { font-size: 20px; }
    .thumb { width: 7px; height: 24px; border-radius: 3px; background: #a6a6a6; }
    h2 { margin: 2px 0 0; font-size: 29.500px; line-height: 43px; letter-spacing: -.5px; color: #212121; white-space: nowrap; }
    .scroll { width: 7px; height: 894px; background: #9f9fa4; border-radius: 0 0 4px 4px; }
    .task { height: 2px; background: #2a2e31; }
  `;
  render() {
    return html`
      <browser-chrome></browser-chrome>
      <div class="page">
        <div class="left">
          <div class="top">
            <h1>Covid-19 Tracker</h1>
            <svg class="logo" width="280" height="52" viewBox="0 0 280 52">
              <defs><pattern id="hatch" width="3" height="3" patternUnits="userSpaceOnUse" patternTransform="rotate(60)"><rect width="3" height="3" fill="#bfe1fd"/><rect width="3" height="1.700" fill="#2d9ff5"/></pattern></defs>
              <text x="1" y="40" font-size="32" fill="url(#hatch)" stroke="#3aa5f6" stroke-width="1" textLength="133" lengthAdjust="spacing">Sujeet</text>
              <text x="143" y="40" font-size="33" fill="#083a5e" textLength="135" lengthAdjust="spacing">Kumar</text>
            </svg>
            <div class="select">India<svg width="14" height="7" viewBox="0 0 14 7"><path fill="#757575" d="M0 0h14L7 7z"/></svg></div>
          </div>
          <div class="cards">
            <info-card selected heading="Corona Virus Cases" today="4.2k" total="15061919"></info-card>
            <info-card green heading="Recovered" today="5.0k" total="12953821"></info-card>
            <info-card heading="Deaths" today="0" total="178793"></info-card>
          </div>
          <div class="mapcard"><case-map></case-map></div>
        </div>
        <div class="right">
          <div class="lead">Live Cases by Country</div>
          <div class="listwrap">
            <div class="list">${countries.map(([n, c]) => html`<div class="row"><span>${n}</span><b>${c}</b></div>`)}</div>
            <div class="thumb"></div>
          </div>
          <h2>WorldWide cases</h2>
          <case-chart></case-chart>
        </div>
        <div class="scroll"></div>
      </div>
      <div class="task"></div>`;
  }
}
